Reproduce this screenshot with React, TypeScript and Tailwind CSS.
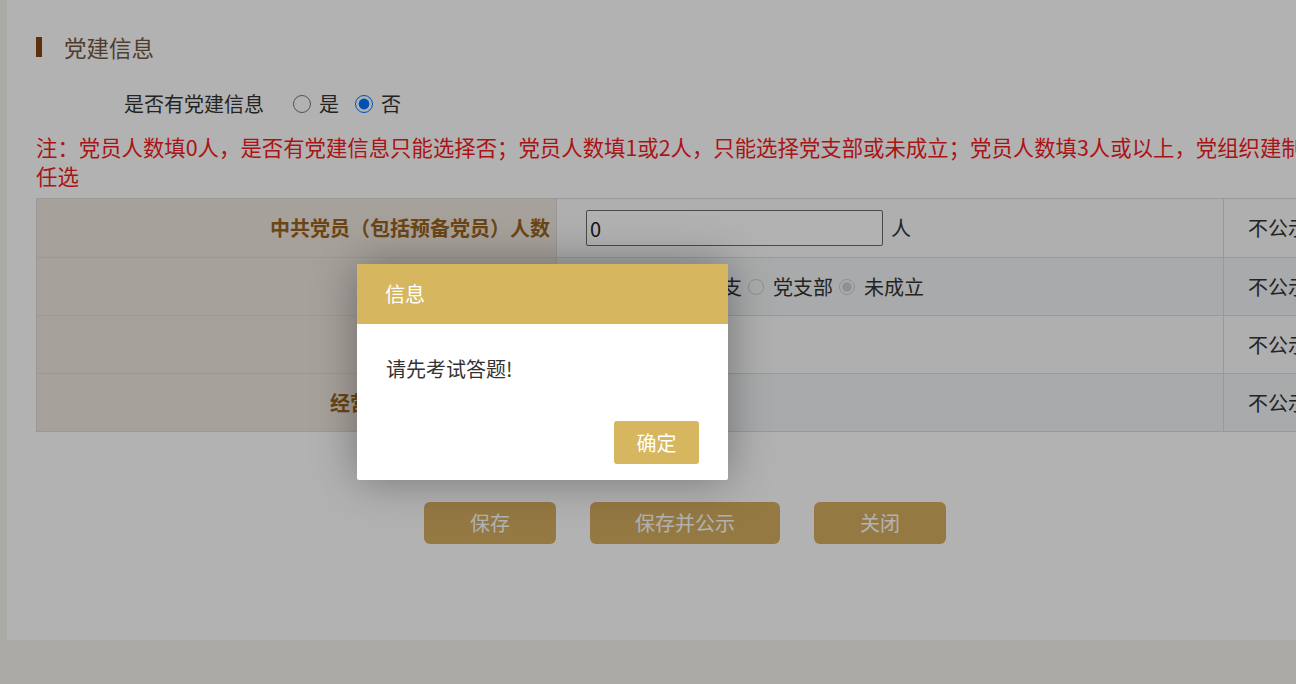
const font = '"Noto Sans CJK SC", "Liberation Sans", sans-serif';

const rows = [
  { label: '中共党员（包括预备党员）人数', kind: 'input', bg: 'bg-[#fbfbfb]' },
  { label: '党组织建制', kind: 'org', bg: 'bg-[#f3f4f5]' },
  { label: '经营者是否为党员', kind: 'yesno', bg: 'bg-[#fbfbfb]' },
  { label: '经营者是否为党组织书记', kind: 'yesno', bg: 'bg-[#f3f4f5]' },
];

function Radio({ label, checked, disabled, name }: { label: string; checked?: boolean; disabled?: boolean; name: string }) {
  return (
    <label className="flex items-center">
      <input type="radio" name={name} defaultChecked={checked} disabled={disabled} className="m-0 h-[16px] w-[16px]" />
      <span className="ml-[9px] mr-[6px]">{label}</span>
    </label>
  );
}

function ValueCell({ kind, idx }: { kind: string; idx: number }) {
  if (kind === 'input') {
    return (
      <div className="flex items-center">
        <input
          defaultValue="0"
          className="h-[36px] w-[297px] rounded-[2px] border border-[#6a6a6a] bg-white px-[3px] text-[20px] text-[#222] outline-none"
        />
        <span className="ml-[8px]">人</span>
      </div>
    );
  }
  if (kind === 'org') {
    return (
      <div className="flex items-center">
        <Radio name="org" label="党委" disabled />
        <Radio name="org" label="党总支" disabled />
        <Radio name="org" label="党支部" disabled />
        <Radio name="org" label="未成立" checked disabled />
      </div>
    );
  }
  return (
    <div className="flex items-center">
      <Radio name={'yn' + idx} label="是" disabled />
      <Radio name={'yn' + idx} label="否" disabled />
    </div>
  );
}

export default function App() {
  return (
    <div className="relative h-[684px] w-full overflow-hidden bg-[#f6f4ec]" style={{ fontFamily: font }}>
      <div className="ml-[7px] h-[640px] w-[1360px] bg-white pl-[29px] pt-[33px] text-[#333]">
        {/* section title */}
        <div className="flex h-[28px] items-center">
          <div className="h-[20px] w-[6px] bg-[#884410]" />
          <h2 className="ml-[22px] text-[22.5px] leading-[28px] text-[#74583f]">党建信息</h2>
        </div>

        <div className="mt-[28px] flex h-[30px] items-center pl-[88px] text-[20px] leading-[30px]">
          <span>是否有党建信息</span>
          <label className="ml-[29px] flex items-center">
            <input type="radio" name="has" className="m-0 h-[18px] w-[18px]" />
            <span className="ml-[8px]">是</span>
          </label>
          <label className="ml-[16px] flex items-center">
            <input type="radio" name="has" defaultChecked className="m-0 h-[18px] w-[18px]" />
            <span className="ml-[8px]">否</span>
          </label>
        </div>

        <p className="mt-[13px] w-[1298px] whitespace-nowrap text-[21.4px] leading-[29px] text-[#f41c22]">
          注：党员人数填0人，是否有党建信息只能选择否；党员人数填1或2人，只能选择党支部或未成立；党员人数填3人或以上，党组织建制
          <br />
          任选
        </p>

        <div className="mt-[8px] w-[1298px] border border-[#dcdcdc] text-[20px]">
          {rows.map((r, i) => (
            <div key={i} className={'grid h-[58px] grid-cols-[519px_667px_1fr] ' + (i > 0 ? 'border-t border-[#dcdcdc]' : '')}>
              <div className="flex items-center justify-end bg-[#efe7e0] pr-[6px] font-bold text-[#9a6420]">{r.label}</div>
              <div className={'flex items-center border-l border-[#dcdcdc] pl-[29px] ' + r.bg}>
                <ValueCell kind={r.kind} idx={i} />
              </div>
              <div className={'flex items-center border-l border-[#dcdcdc] pl-[24px] ' + r.bg}>不公示</div>
            </div>
          ))}
        </div>

        <div className="mt-[70px] flex w-[1298px] justify-center gap-[34px] text-[20px] text-white">
          <button className="h-[42px] w-[132px] rounded-[6px] bg-[#d6ae60]">保存</button>
          <button className="h-[42px] w-[190px] rounded-[6px] bg-[#d6ae60]">保存并公示</button>
          <button className="h-[42px] w-[132px] rounded-[6px] bg-[#d6ae60]">关闭</button>
        </div>
      </div>

      {/* modal overlay */}
      <div className="absolute inset-0 bg-black/30" />
      <div className="absolute left-[357px] top-[264px] flex h-[216px] w-[371px] flex-col rounded-[2px] bg-white shadow-[0_0_45px_rgba(0,0,0,0.35)]">
        <div className="flex h-[60px] items-center bg-[#d6b65e] pl-[28px] text-[20px] text-white">信息</div>
        <div className="mt-[31px] pl-[29px] text-[20px] leading-[28px] text-[#333]">请先考试答题!</div>
        <div className="mt-auto flex justify-end pb-[16px] pr-[29px]">
          <button className="h-[43px] w-[85px] rounded-[3px] bg-[#d6b65e] text-[20px] text-white">确定</button>
        </div>
      </div>
    </div>
  );
}
